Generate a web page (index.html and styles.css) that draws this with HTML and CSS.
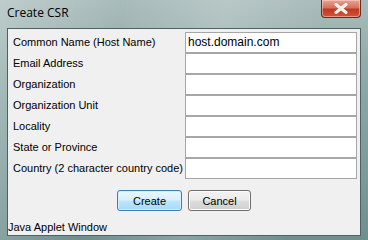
FILE: index.html
```html
<!DOCTYPE html>
<html>
<head>
<meta charset="utf-8">
<link rel="stylesheet" href="styles.css">
</head>
<body>
<div class="window">
  <div class="titlebar">
    <span class="title">Create CSR</span>
    <div class="close">
      <svg width="14" height="11" viewBox="0 0 14 11"><path d="M2 1.5 L12 9.5 M12 1.5 L2 9.5" stroke="#ffffff" stroke-width="3" stroke-linecap="round"/><path d="M2 1.5 L12 9.5 M12 1.5 L2 9.5" stroke="#f4e9e6" stroke-width="1.6" stroke-linecap="round"/></svg>
    </div>
  </div>
  <div class="panel">
    <div class="form">
      <label class="lbl">Common Name (Host Name)</label><div class="field">host.domain.com</div>
      <label class="lbl">Email Address</label><div class="field"></div>
      <label class="lbl">Organization</label><div class="field"></div>
      <label class="lbl">Organization Unit</label><div class="field"></div>
      <label class="lbl">Locality</label><div class="field"></div>
      <label class="lbl">State or Province</label><div class="field"></div>
      <label class="lbl">Country (2 character country code)</label><div class="field"></div>
    </div>
    <div class="buttons">
      <button class="btn btn-default">Create</button>
      <button class="btn">Cancel</button>
    </div>
    <div class="status">Java Applet Window</div>
  </div>
</div>
</body>
</html>
```
FILE: styles.css
```css
html, body {
  margin: 0;
  padding: 0;
}
body {
  width: 368px;
  height: 240px;
  overflow: hidden;
  font-family: "Liberation Sans", Arial, sans-serif;
}
.window {
  width: 368px;
  height: 240px;
  box-sizing: border-box;
  padding: 0 7px 4px 7px;
  display: flex;
  flex-direction: column;
  background:
    linear-gradient(100deg, rgba(255,255,255,0.25) 0%, rgba(255,255,255,0) 30%, rgba(255,255,255,0.18) 55%, rgba(255,255,255,0) 80%),
    linear-gradient(180deg, #a9bcbb 0%, #8faaa8 30%, #6f8f8e 100%);
}
.titlebar {
  height: 28px;
  flex: none;
  display: flex;
  align-items: flex-start;
  position: relative;
}
.title {
  font-family: "Open Sans", "Noto Sans", sans-serif;
  font-size: 12px;
  color: #000;
  padding-top: 5px;
  padding-left: 0;
  line-height: 16px;
}
.close {
  position: absolute;
  right: 0;
  top: 0;
  width: 40px;
  height: 18px;
  box-sizing: border-box;
  border: 1px solid #6b2a22;
  border-top: none;
  border-radius: 0 0 4px 4px;
  background: linear-gradient(180deg, #e8a595 0%, #d5705b 45%, #c0391f 55%, #d1553a 100%);
  display: flex;
  align-items: center;
  justify-content: center;
  box-shadow: inset 0 0 0 1px rgba(255,220,210,0.5);
}
.panel {
  flex: 1;
  background: #f0f0f0;
  border: 1px solid #4e6163;
  display: flex;
  flex-direction: column;
  padding: 3px 4px 0 4px;
}
.form {
  display: grid;
  grid-template-columns: 173px 172px;
  grid-auto-rows: 21px;
}
.lbl {
  font-size: 11px;
  color: #000;
  padding-left: 1px;
  line-height: 21px;
}
.field {
  background: #fff;
  border: 1px solid #a6a6a6;
  font-size: 12px;
  line-height: 19px;
  padding-left: 2px;
  color: #000;
}
.buttons {
  display: flex;
  justify-content: center;
  gap: 6px;
  margin-top: 11px;
}
.btn {
  height: 21px;
  box-sizing: border-box;
  font-family: "Liberation Sans", Arial, sans-serif;
  font-size: 11px;
  color: #000;
  border: 1px solid #707070;
  border-radius: 3px;
  background: linear-gradient(180deg, #f2f2f2 0%, #ebebeb 48%, #dddddd 52%, #cfcfcf 100%);
  box-shadow: inset 0 0 0 1px #fcfcfc;
  padding: 0;
  width: 63px;
}
.btn-default {
  width: 65px;
  border-color: #3c7fb1;
  background: linear-gradient(180deg, #eaf6fd 0%, #d9f0fc 48%, #bee6fd 52%, #a7d9f5 100%);
  box-shadow: inset 0 0 0 1px #d6eefc;
}
.status {
  margin-top: auto;
  font-size: 11px;
  color: #000;
  line-height: 14px;
  padding-bottom: 1px;
  margin-left: -4px;
}
```
